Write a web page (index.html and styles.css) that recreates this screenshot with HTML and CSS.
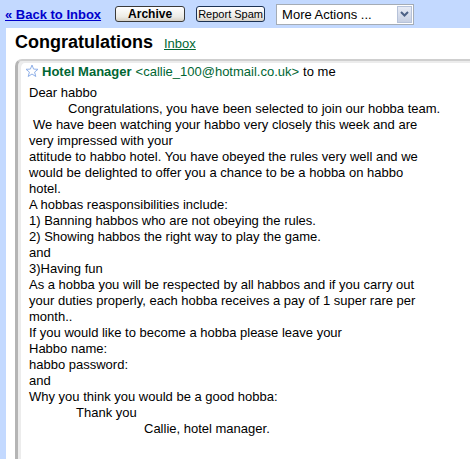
FILE: index.html
```html
<!DOCTYPE html>
<html>
<head>
<meta charset="utf-8">
<link rel="stylesheet" href="styles.css">
</head>
<body>
<div class="toolbar">
  <a class="back" href="#">« Back to Inbox</a>
  <button class="btn btn-archive">Archive</button>
  <button class="btn btn-spam">Report Spam</button>
  <div class="select">
    <span class="select-text">More Actions ...</span>
    <span class="select-arrow"><svg width="9" height="6" viewBox="0 0 9 6"><path d="M1 1 L4.5 4.5 L8 1" fill="none" stroke="#4d6185" stroke-width="2"/></svg></span>
  </div>
</div>
<div class="panel">
  <div class="subject">
    <h1 class="title">Congratulations</h1>
    <a class="label" href="#">Inbox</a>
  </div>
  <div class="card">
    <div class="sender-row">
      <svg class="star" width="14" height="14" viewBox="0 0 14 14"><path d="M7 1 L8.6 5.1 L13 5.3 L9.6 8.1 L10.8 12.5 L7 10 L3.2 12.5 L4.4 8.1 L1 5.3 L5.4 5.1 Z" fill="#fff" stroke="#8fb0e8" stroke-width="1"/></svg>
      <span class="sender">Hotel Manager</span>
      <span class="email">&lt;callie_100@hotmail.co.uk&gt;</span>
      <span class="to">to me</span>
    </div>
    <div class="message">
      <div>Dear habbo</div>
      <div class="indent1">Congratulations, you have been selected to join our hobba team.</div>
      <div class="indent0">We have been watching your habbo very closely this week and are</div>
      <div>very impressed with your</div>
      <div>attitude to habbo hotel. You have obeyed the rules very well and we</div>
      <div>would be delighted to offer you a chance to be a hobba on habbo</div>
      <div>hotel.</div>
      <div>A hobbas reasponsibilities include:</div>
      <div>1) Banning habbos who are not obeying the rules.</div>
      <div>2) Showing habbos the right way to play the game.</div>
      <div>and</div>
      <div>3)Having fun</div>
      <div>As a hobba you will be respected by all habbos and if you carry out</div>
      <div>your duties properly, each hobba receives a pay of 1 super rare per</div>
      <div>month..</div>
      <div>If you would like to become a hobba please leave your</div>
      <div>Habbo name:</div>
      <div>habbo password:</div>
      <div>and</div>
      <div>Why you think you would be a good hobba:</div>
      <div class="indent2">Thank you</div>
      <div class="indent3">Callie, hotel manager.</div>
    </div>
  </div>
</div>
</body>
</html>
```
FILE: styles.css
```css
html, body {
  margin: 0;
  padding: 0;
}
body {
  background: #c3d9ff;
  font-family: "Liberation Sans", Arial, sans-serif;
  font-size: 13px;
  color: #000;
  width: 470px;
  height: 459px;
  overflow: hidden;
}
.toolbar {
  height: 28px;
  display: flex;
  align-items: center;
  padding-left: 5px;
}
.back {
  color: #0000cc;
  font-weight: bold;
  font-size: 13px;
  text-decoration: underline;
  margin-right: 14px;
}
.btn {
  font-family: "Liberation Sans", Arial, sans-serif;
  font-size: 11px;
  height: 16px;
  padding: 0;
  margin: 0 11px 0 0;
  border: 1px solid #1c3254;
  border-radius: 3px;
  background: linear-gradient(#ffffff, #ecebe6 70%, #d6d0c5);
  color: #000;
  line-height: 14px;
}
.btn-archive {
  width: 70px;
  font-weight: bold;
  font-size: 12px;
  border-color: #3a3a3a;
}
.btn-spam {
  width: 69px;
}
.select {
  width: 138px;
  height: 21px;
  box-sizing: border-box;
  border: 1px solid #a5acb5;
  background: #fff;
  display: flex;
  align-items: center;
  justify-content: space-between;
  padding: 0 1px 0 5px;
}
.select-text {
  font-size: 13px;
}
.select-arrow {
  width: 15px;
  height: 17px;
  box-sizing: border-box;
  border: 1px solid #b6c2d9;
  background: linear-gradient(#e7ebf5, #c7d0e3);
  display: flex;
  align-items: center;
  justify-content: center;
}
.panel {
  margin-left: 6px;
  background: #fff;
  height: 431px;
  padding-left: 9px;
  padding-top: 3px;
  box-sizing: border-box;
}
.subject {
  display: flex;
  align-items: baseline;
  gap: 11px;
  height: 22px;
}
.title {
  margin: 0;
  font-size: 18px;
  line-height: 22px;
  font-weight: bold;
}
.label {
  color: #006633;
  font-size: 13px;
  text-decoration: underline;
}
.card {
  margin-top: 6px;
  border-top: 2px solid #cfcfcf;
  border-left: 3px solid #b5b5b5;
  border-top-left-radius: 7px;
  box-shadow: inset 3px 2px 0 #ececec;
  height: 400px;
  padding: 2px 0 0 7px;
}
.sender-row {
  display: flex;
  align-items: center;
  height: 16px;
  white-space: nowrap;
}
.star {
  margin-right: 3px;
}
.sender {
  color: #006633;
  font-weight: bold;
  margin-right: 4px;
}
.email {
  color: #006633;
  margin-right: 4px;
}
.message {
  margin-top: 6px;
  padding-left: 4px;
  line-height: 16px;
  white-space: nowrap;
}
.indent0 { padding-left: 4px; }
.indent1 { padding-left: 39px; }
.indent2 { padding-left: 47px; }
.indent3 { padding-left: 115px; }
```
